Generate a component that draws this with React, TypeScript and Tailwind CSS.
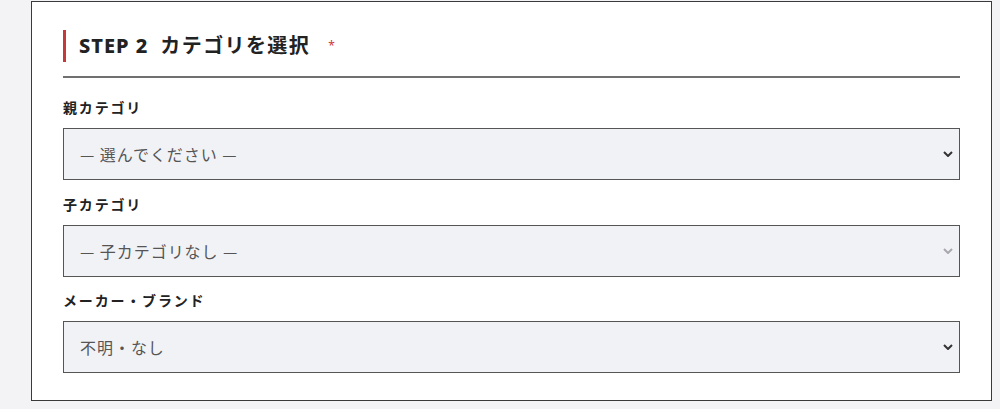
import React from "react";

const fields = [
  { label: "親カテゴリ", value: "— 選んでください —", disabled: false },
  { label: "子カテゴリ", value: "— 子カテゴリなし —", disabled: true },
  { label: "メーカー・ブランド", value: "不明・なし", disabled: false },
];

const Chevron: React.FC<{ muted?: boolean }> = ({ muted }) => (
  <svg
    width="10"
    height="6"
    viewBox="0 0 10 6"
    className={`pointer-events-none absolute right-[7px] top-1/2 -translate-y-1/2 ${
      muted ? "text-[#a8a8ae]" : "text-[#333]"
    }`}
  >
    <path d="M1 1l4 4 4-4" fill="none" stroke="currentColor" strokeWidth="2" />
  </svg>
);

export default function App() {
  return (
    <div
      className="min-h-[409px] bg-[#f3f3f6] pt-px"
      style={{ fontFamily: '"Noto Sans", "Noto Sans CJK JP", sans-serif' }}
    >
      <div className="ml-[31px] w-[961px] h-[400px] border border-[#3a3a3a] bg-white px-[31px] pt-[28px]">
        <div className="flex items-center h-[32px]">
          <div className="w-[3px] h-[32px] bg-[#c43a3a]" />
          <h2 className="ml-[13px] flex items-baseline text-[20px] font-extrabold tracking-[0.05em] text-[#222]">
            <span>STEP 2</span>
            <span className="ml-[12px] font-bold tracking-[0.07em]">カテゴリを選択</span>
          </h2>
          <span className="ml-[18px] text-[12px] text-[#d0393c]">*</span>
        </div>
        <div className="mt-[14px] h-[2px] bg-[#707070]" />

        <div className="mt-[20px] flex flex-col gap-[14.5px]">
          {fields.map((f) => (
            <div key={f.label}>
              <label className="block h-[20px] leading-5 mb-[10px] text-[14px] font-bold tracking-[0.13em] text-[#222]">
                {f.label}
              </label>
              <div className="relative">
                <select
                  disabled={f.disabled}
                  className="block w-full h-[52px] appearance-none border border-[#555] bg-[#f1f2f6] pl-4 text-[16px] tracking-[0.06em] text-[#555] outline-none"
                  style={{ fontFamily: '"Noto Sans CJK JP", sans-serif' }}
                  defaultValue={f.value}
                >
                  <option>{f.value}</option>
                </select>
                <Chevron muted={f.disabled} />
              </div>
            </div>
          ))}
        </div>
      </div>
    </div>
  );
}
